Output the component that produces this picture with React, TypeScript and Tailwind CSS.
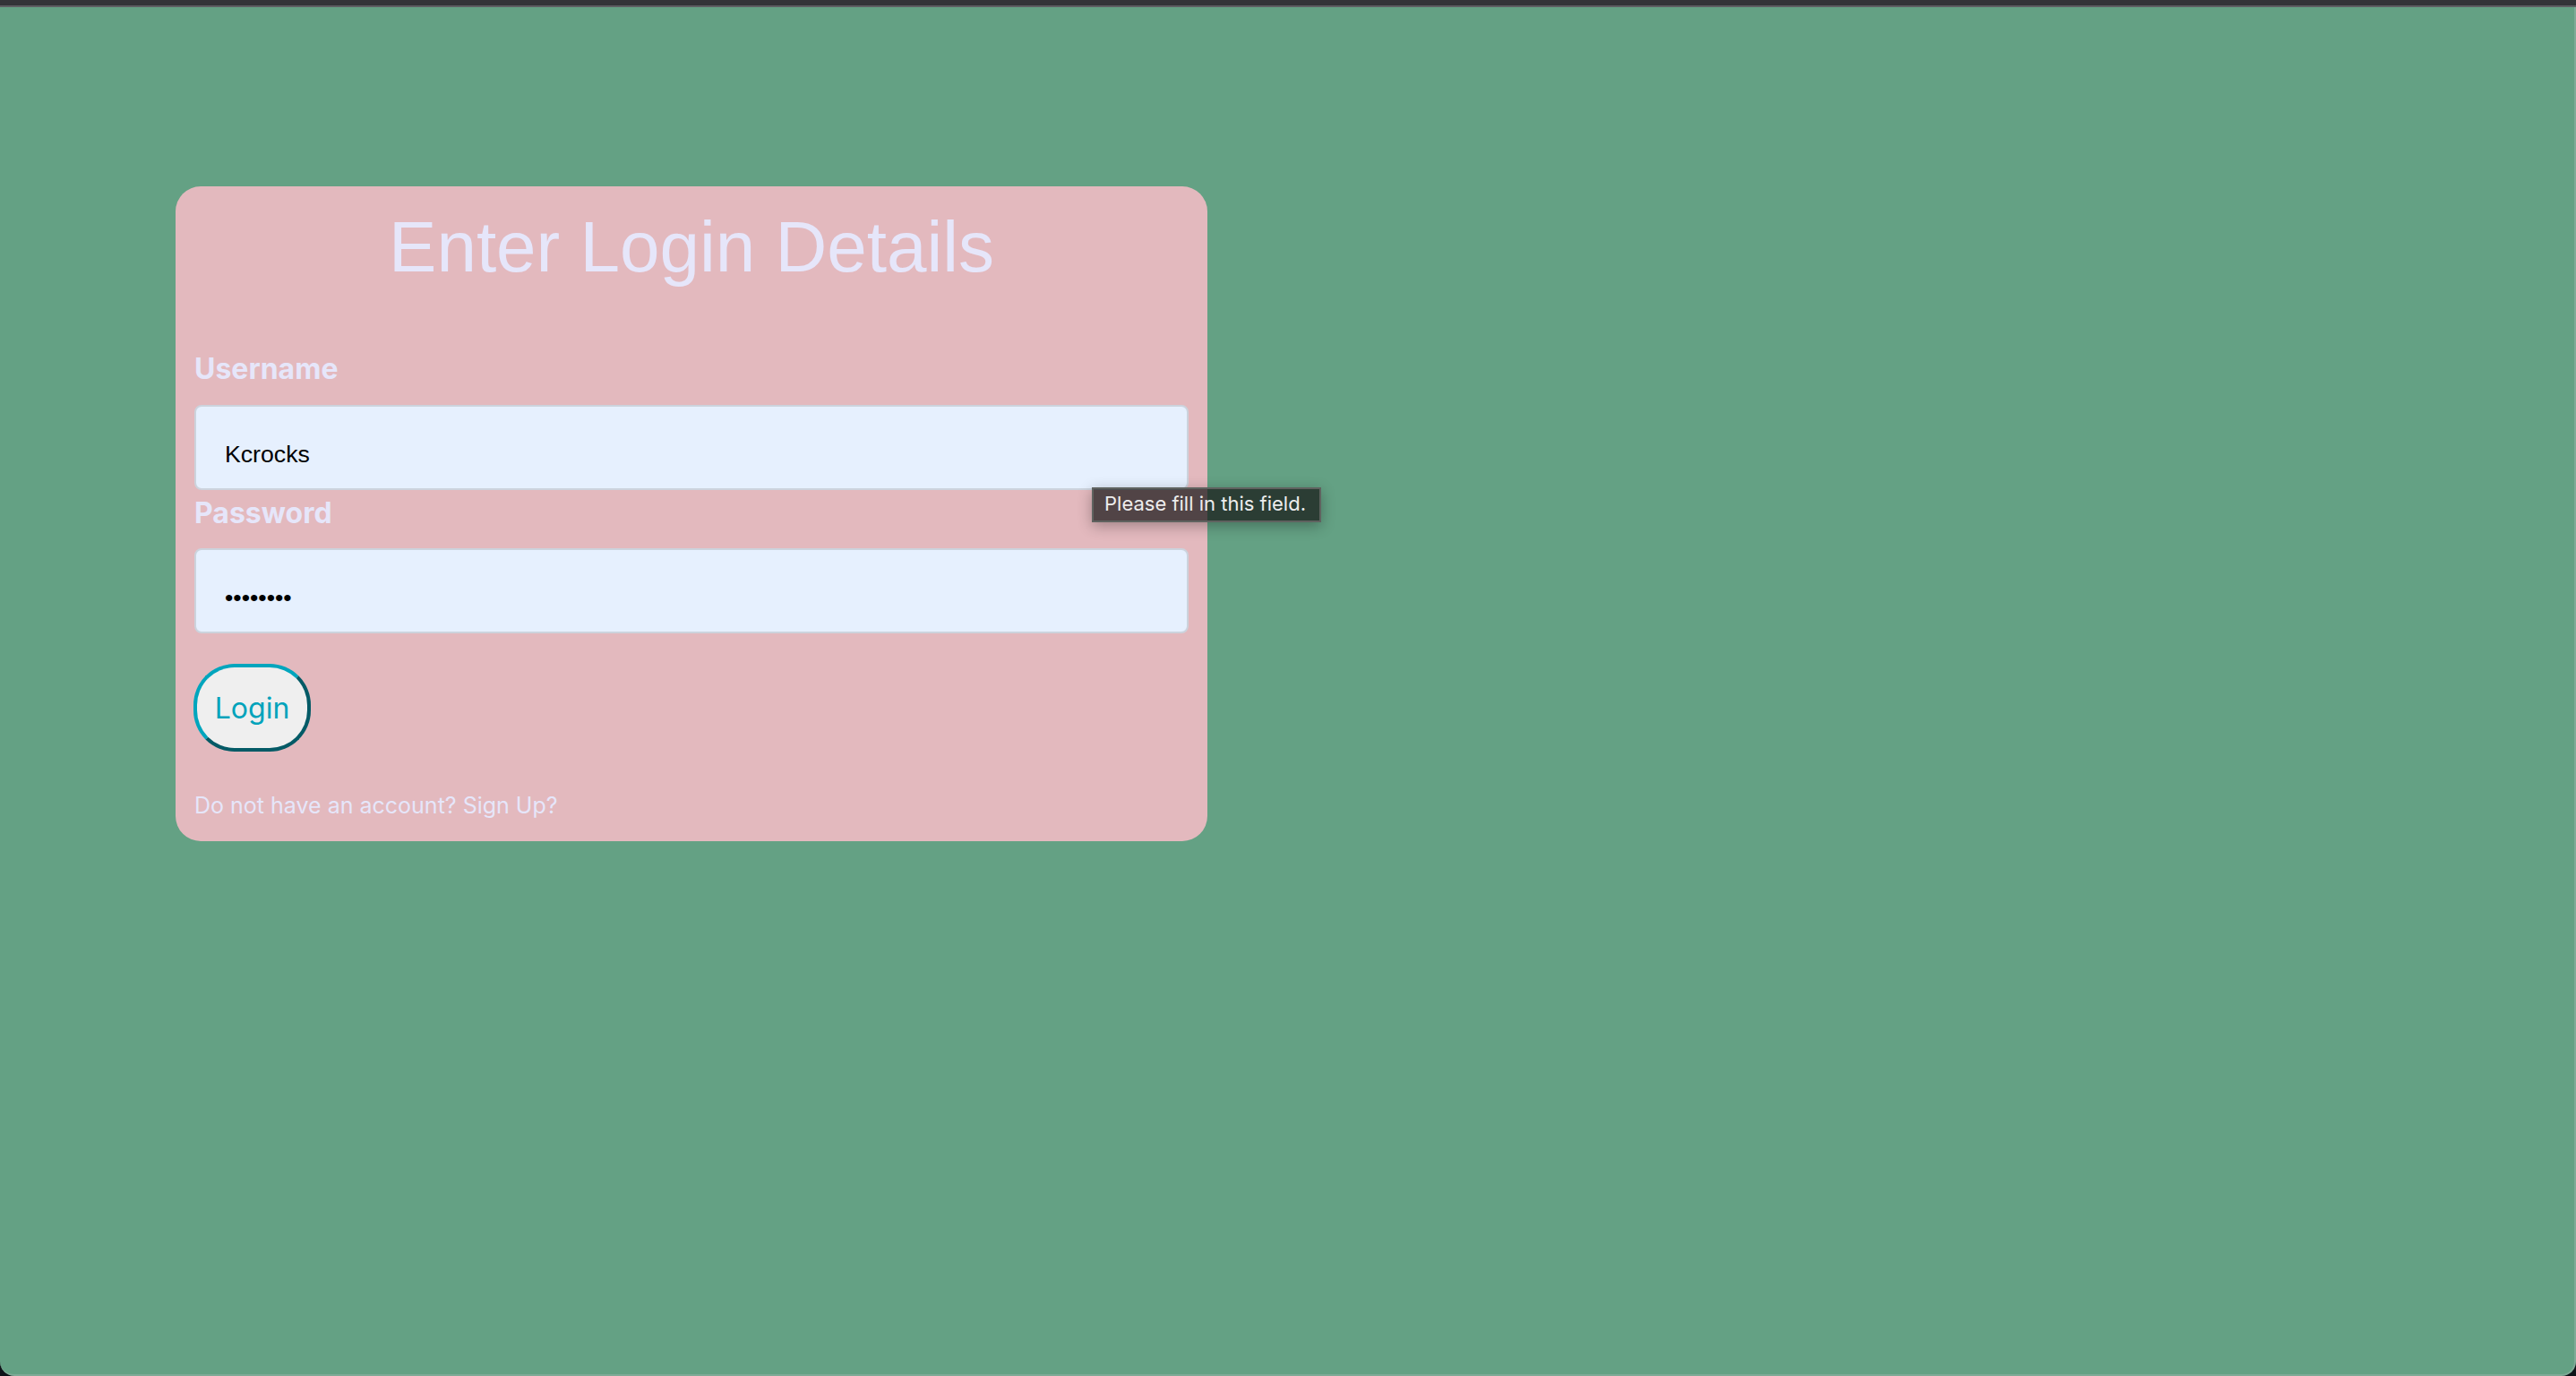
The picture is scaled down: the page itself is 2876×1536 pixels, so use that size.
import React from 'react';

const sans = { fontFamily: 'Inter, "Noto Sans", sans-serif' };

export default function App() {
  return (
    <div className="w-[2876px] h-[1536px] bg-[#0e1318] flex flex-col overflow-hidden">
      <div className="h-[6px] bg-[#333438]" />
      <div className="h-[2px] bg-[#5d5e62]" />

      <main className="flex-1 bg-[#64a184] rounded-b-[16px] border-r-2 border-b-2 border-[#7fab97] pt-[200px] pl-[196px]">
        <div className="relative w-[1152px] bg-[#e3b9be] rounded-[28px] pt-[22px] px-[21px] pb-[24px]">
          <h1 className="text-center text-[80px] leading-[92px] text-[#e6e6fa] font-['Liberation_Sans',Arial,sans-serif]">
            Enter Login Details
          </h1>

          <form className="flex flex-col" onSubmit={(e) => e.preventDefault()}>
            <label className="mt-[70px] text-[32px] leading-[40px] font-bold text-[#e6e6fa]" style={sans}>
              Username
            </label>
            <input
              type="text"
              defaultValue="Kcrocks"
              className="mt-[20px] h-[95px] w-full rounded-[8px] border-2 border-[#ccd3dd] bg-[#e6f0fe] pl-[32px] pt-[24px] pb-[8px] text-[26.67px] text-black outline-none font-['Liberation_Sans',Arial,sans-serif]"
            />

            <label className="mt-[6px] text-[32px] leading-[40px] font-bold text-[#e6e6fa]" style={sans}>
              Password
            </label>
            <input
              type="password"
              defaultValue="12345678"
              className="mt-[19px] h-[95px] w-full rounded-[8px] border-2 border-[#ccd3dd] bg-[#e6f0fe] pl-[32px] pt-[24px] pb-[8px] text-[26.67px] text-black outline-none font-['Liberation_Sans',Arial,sans-serif]"
            />

            <div className="mt-[34px] -ml-px">
              <button
                type="submit"
                className="h-[98px] w-[131px] rounded-[46px] border-4 border-t-[#00a5bd] border-l-[#00a5bd] border-b-[#045a66] border-r-[#045a66] bg-[#efefef] pt-[2px] text-[32px] text-[#00a3bb]"
                style={sans}
              >
                Login
              </button>
            </div>

            <p className="mt-[44px] text-[25px] leading-[32px] text-[#e6e6fa]" style={sans}>
              Do not have an account? Sign Up?
            </p>
          </form>

          <div
            className="absolute left-[1023px] top-[336px] h-[39px] w-[256px] flex items-center pl-[12px] pb-[2px] border-2 border-[#5f625f] bg-[rgba(18,18,18,0.7)] text-[22px] text-[#ededed] shadow-[0_4px_16px_rgba(0,0,0,0.3)]"
            style={sans}
          >
            Please fill in this field.
          </div>
        </div>
      </main>
    </div>
  );
}
